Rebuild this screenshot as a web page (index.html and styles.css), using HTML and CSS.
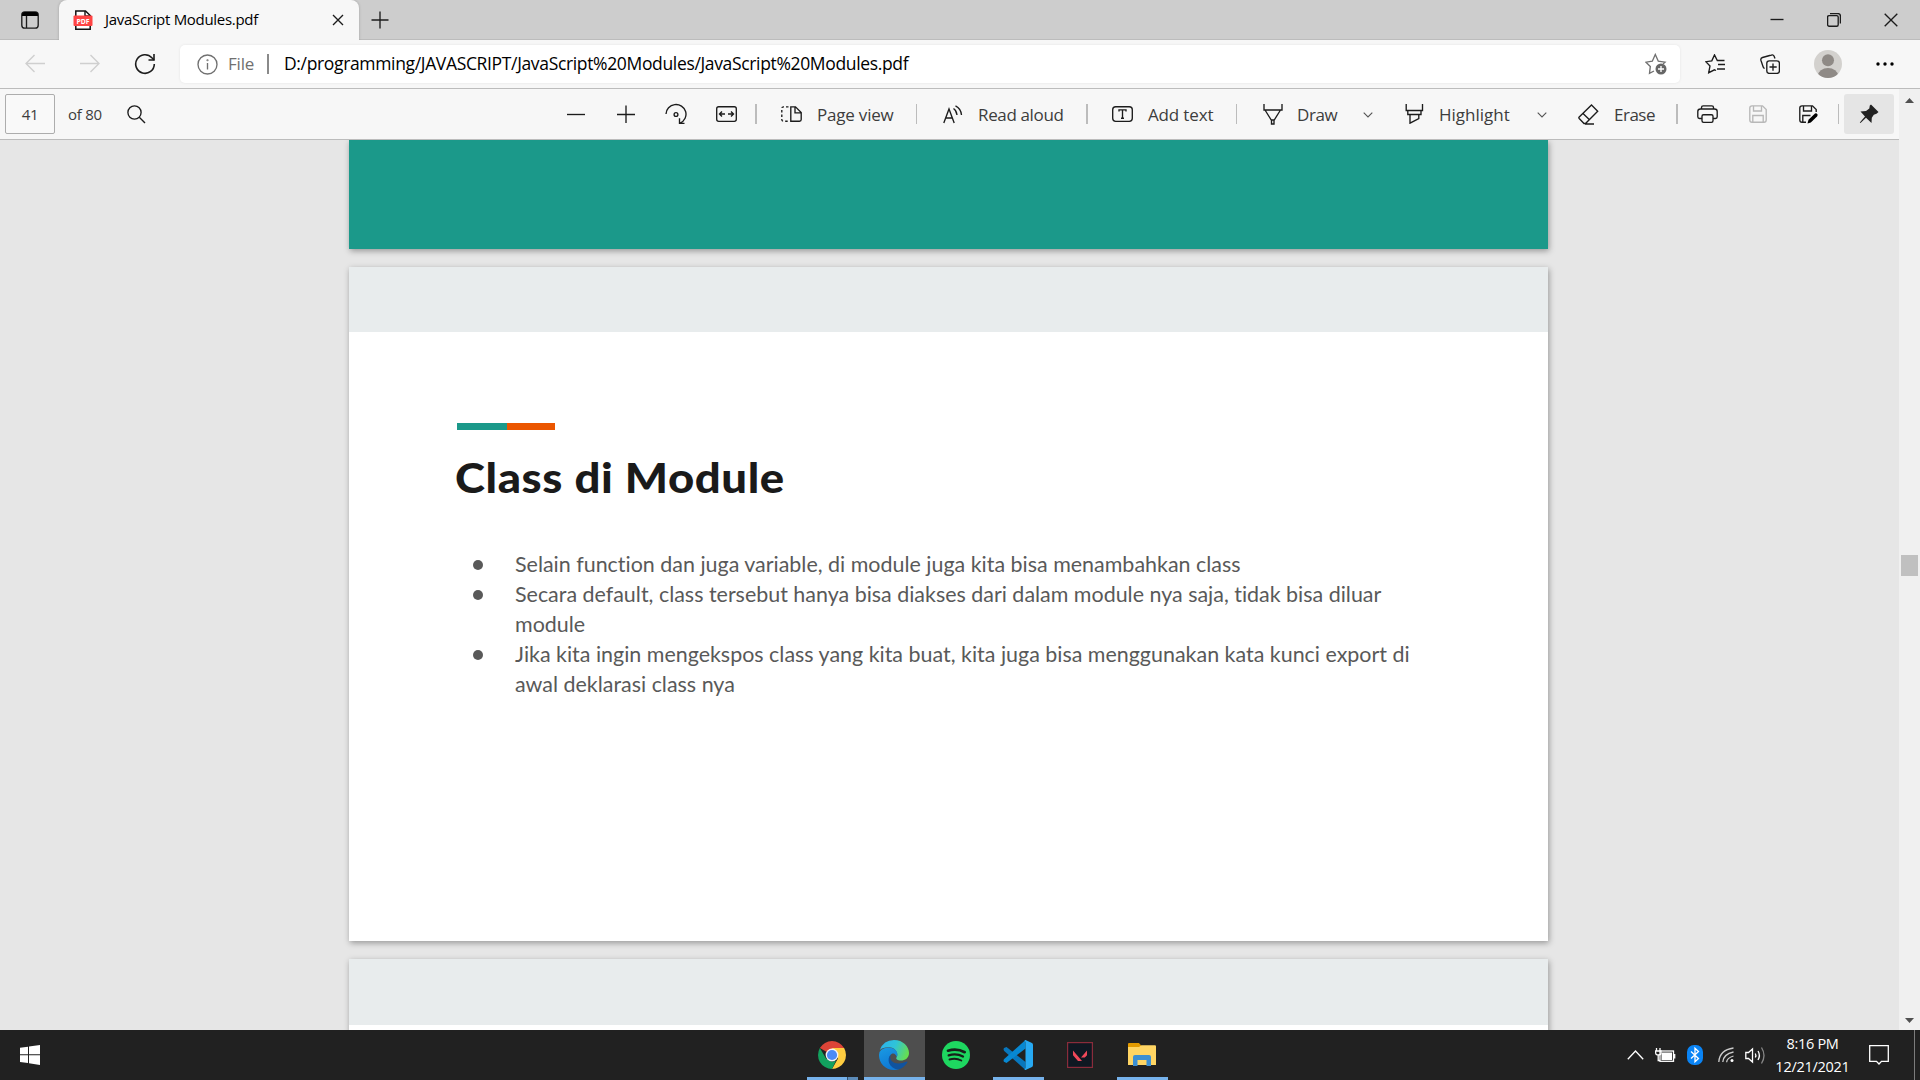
FILE: index.html
```html
<!DOCTYPE html>
<html lang="en">
<head>
<meta charset="utf-8">
<title>JavaScript Modules.pdf</title>
<link rel="stylesheet" href="styles.css">
</head>
<body>
<div class="tabstrip">
  <div class="tab-actions"><svg class="ic" width="18" height="18" viewBox="0 0 18 18"><rect x=".8" y=".8" width="16.4" height="16.4" rx="3"/><path class="fill" d="M1 5V3.500Q1 1 3.500 1H14.500Q17 1 17 3.500V5Z"/><path d="M5.500 5V17"/></svg></div>
  <div class="tab">
    <svg class="favicon" width="20" height="20" viewBox="0 0 20 20"><path d="M2.800 19.200V1H12.500L17.200 5.500V19.200Z" fill="#fff" stroke="#111" stroke-width="1.500"/><path d="M12 1V6H17.500" fill="none" stroke="#111" stroke-width="1.400"/><rect x=".5" y="5.500" width="19" height="10.500" rx="1" fill="#f44"/><text x="10" y="13.500" text-anchor="middle">PDF</text></svg>
    <span class="tab-title">JavaScript Modules.pdf</span>
    <svg class="ic tab-close" width="12" height="12" viewBox="0 0 12 12"><path d="M1 1L11 11M11 1L1 11"/></svg>
  </div>
  <svg class="ic new-tab" width="18" height="18" viewBox="0 0 18 18"><path d="M9 .5V17.500M.5 9H17.500"/></svg>
  <div class="window-buttons">
    <svg class="ic" width="14" height="14" viewBox="0 0 14 14"><path d="M.5 6.500H13.500"/></svg>
    <svg class="ic" width="14" height="14" viewBox="0 0 14 14"><rect x=".6" y="2.600" width="10.600" height="10.600" rx="1.500"/><path d="M3 .6H11Q13.400 .6 13.400 3V10.500"/></svg>
    <svg class="ic" width="14" height="14" viewBox="0 0 14 14"><path d="M.7 .7L13.300 13.300M13.300 .7L.7 13.300"/></svg>
  </div>
</div>

<div class="navbar">
  <div class="nav-buttons">
    <svg class="ic off" width="20" height="20" viewBox="0 0 20 20"><path d="M20 9.500H1M9.500 1L1 9.500L9.500 18"/></svg>
    <svg class="ic off" width="20" height="20" viewBox="0 0 20 20"><path d="M0 9.500H19M10.500 1L19 9.500L10.500 18"/></svg>
    <svg class="ic reload" width="22" height="22" viewBox="0 0 22 22"><path d="M20.300 11A9.300 9.300 0 1 1 17.900 4.800L20 7"/><path d="M20 1V7H14.500"/></svg>
  </div>
  <div class="address">
    <svg class="ic info" width="21" height="21" viewBox="0 0 21 21"><circle cx="10.500" cy="10.500" r="9.500"/><path d="M10.500 9V15.500"/><circle cx="10.500" cy="6.200" r=".4"/></svg>
    <span class="scheme">File</span>
    <i class="addr-rule"></i>
    <span class="url">D:/programming/JAVASCRIPT/JavaScript%20Modules/JavaScript%20Modules.pdf</span>
    <svg class="ic add-star" width="22" height="22" viewBox="0 0 22 22"><path d="M9 18L4.500 20.300L5.300 13.500L1 9.200L7.300 8.200L10.300 1.500L13.300 8.200L20 9.200L18 11"/><circle cx="16" cy="16" r="5.500" fill="#666" stroke="none"/><path d="M16 13V19M13 16H19" stroke="#fff"/></svg>
  </div>
  <div class="nav-tools">
    <svg class="ic" width="20" height="20" viewBox="0 0 20 20"><path d="M19.500 6.500H12.300L9.500 .9L6.800 6.900L.8 7.700L5 12L3.700 18.700L9.500 15.800L11 16.500M13 10.500H20M12 15H20"/></svg>
    <svg class="ic" width="20" height="20" viewBox="0 0 20 20"><rect x="6.800" y="6.800" width="12.600" height="12.600" rx="2.500"/><path d="M13 9.500V16.700M9.500 13H16.700M15 4.500L14 2Q13.300 .4 11.500 1L2.500 3.500Q.4 4.200 .9 6.200L3 12.500Q3.400 14 4.600 14.500"/></svg>
    <svg width="28" height="28" viewBox="0 0 28 28"><defs><clipPath id="face"><circle cx="14" cy="14" r="14"/></clipPath></defs><circle cx="14" cy="14" r="14" fill="#d3d1ce"/><g clip-path="url(#face)" fill="#8f8a86"><circle cx="14" cy="10.300" r="6"/><ellipse cx="14" cy="25.500" rx="10" ry="7.500"/></g></svg>
    <svg width="18" height="4" viewBox="0 0 18 4"><circle cx="2" cy="2" r="1.700"/><circle cx="9" cy="2" r="1.700"/><circle cx="16" cy="2" r="1.700"/></svg>
  </div>
</div>

<div class="viewer">
  <div class="viewer-main">
    <div class="pdfbar">
      <div class="page-box">41</div>
      <span class="page-count">of 80</span>
      <svg class="ic search" width="19" height="19" viewBox="0 0 19 19"><circle cx="7.500" cy="7.500" r="6.600"/><path d="M12.300 12.300L18 18"/></svg>
      <div class="zoom-tools">
        <svg class="ic" width="18" height="18" viewBox="0 0 18 18"><path d="M0 9.500H18"/></svg>
        <svg class="ic" width="18" height="18" viewBox="0 0 18 18"><path d="M0 9.500H18M9 .5V18"/></svg>
        <svg class="ic" width="22" height="22" viewBox="0 0 22 22"><path d="M1 11A10 9.700 0 1 1 15.200 20M14.500 15.300V20.300H19.500"/><circle cx="11" cy="11.500" r="1.900"/></svg>
        <svg class="ic" width="21" height="16" viewBox="0 0 21 16"><rect x=".7" y=".7" width="19.600" height="14.600" rx="2"/><path d="M3.500 8H9M6 5.500L3.500 8L6 10.500M12 8H17.500M15 5.500L17.500 8L15 10.500"/></svg>
      </div>
      <i class="rule wide"></i>
      <div class="tool t-view"><svg class="ic" width="21" height="16" viewBox="0 0 21 16"><path d="M9.800 .8H14.500L20.200 6.500V13.500Q20.200 15.200 18.500 15.200H9.800ZM14 .8V6.800H20"/><path stroke-dasharray="2.500 2" d="M7.500 .8H2.500Q.8 .8 .8 2.500V13.500Q.8 15.200 2.500 15.200H7.500"/></svg>Page view</div>
      <i class="rule"></i>
      <div class="tool t-read"><svg class="ic" width="20" height="19" viewBox="0 0 20 19"><path d="M.8 18L6 4L11.200 18M2.700 13H9.300M10.500 3.500Q13.500 5.500 14 10M12.500 .8Q18 3.500 18.500 10"/></svg>Read aloud</div>
      <i class="rule wide"></i>
      <div class="tool t-text"><svg class="ic" width="21" height="16" viewBox="0 0 21 16"><rect x=".7" y=".7" width="19.600" height="14.600" rx="3"/><path d="M7 5.500V3.800H14V5.500M10.500 3.800V12.200M9 12.200H12"/></svg>Add text</div>
      <i class="rule"></i>
      <div class="tool t-draw"><svg class="ic" width="20" height="21" viewBox="0 0 20 21"><path d="M1 0V6H19V0M2 6L8.500 16.500V20H11V16.500L17.500 6M8.500 16H11"/></svg>Draw</div>
      <div class="chev"><svg class="ic" width="10" height="6" viewBox="0 0 10 6"><path d="M.7 .7L5 5L9.300 .7"/></svg></div>
      <div class="tool t-light"><svg class="ic" width="19" height="20" viewBox="0 0 19 20"><path d="M1.200 0V6.500H17.500V0M2.800 6.500V10.500H16V6.500M5 10.500V19.200L13.800 14.500V10.500"/></svg>Highlight</div>
      <div class="chev c-light"><svg class="ic" width="10" height="6" viewBox="0 0 10 6"><path d="M.7 .7L5 5L9.300 .7"/></svg></div>
      <div class="tool t-erase"><svg class="ic" width="21" height="21" viewBox="0 0 21 21"><path d="M13.500 1L19.700 7.200L7.500 19.500H6L1.200 14.500Q.5 13.700 1.200 13ZM5 9.500L11.500 15.800M7 20H16"/></svg>Erase</div>
      <i class="rule wide"></i>
      <div class="slot s-print"><svg class="ic" width="21" height="18" viewBox="0 0 21 18"><path d="M5 13.500H2.500Q.8 13.500 .8 11.700V6.500Q.8 4 3.500 4H17.500Q20.200 4 20.200 6.500V11.700Q20.200 13.500 18.500 13.500H16"/><path d="M4.500 4V2.500Q4.500 .8 6.200 .8H14.800Q16.500 .8 16.500 2.500V4"/><rect x="5" y="9.700" width="11" height="7.600" rx="1.500"/></svg></div>
      <div class="slot s-save"><svg class="ic off2" width="18" height="18" viewBox="0 0 18 18"><path d="M3 .8H13.500L17.200 4.500V15Q17.200 17.200 15 17.200H3Q.8 17.200 .8 15V3Q.8 .8 3 .8ZM4.500 .8V6H12.500V.8M3.800 17V10.500H14.200V17"/></svg></div>
      <div class="slot s-saveas"><svg class="ic" width="19" height="19" viewBox="0 0 19 19"><path d="M7 17.200H3Q.8 17.200 .8 15V3Q.8 .8 3 .8H13.500L17.200 4.500V7M4.500 .8V6H12.500V.8M3.800 17V10.500H11.500"/><path class="fill" d="M8.500 18.500L9.500 14.800L16 8.500Q17.500 7.800 18.300 9.200Q19 10.500 18 11.500L11.800 17.500Z"/></svg></div>
      <i class="rule"></i>
      <div class="pin"><svg width="20" height="20" viewBox="0 0 20 20"><path d="M12 .5L19.500 8L17.500 9.800L14.800 10.800L12.800 13.800L12.500 19L7 13.800L1.500 19L.8 18.500L6 12.500L1.500 7.500L7 7L10.300 4.500L10.800 1.500Z" fill="#222"/></svg></div>
    </div>
    <div class="pages">
      <div class="page page-prev"></div>
      <div class="page page-current">
        <div class="slide-head"></div>
        <div class="slide-body">
          <div class="accent"></div>
          <h1>Class di Module</h1>
          <ul>
            <li>Selain function dan juga variable, di module juga kita bisa menambahkan class</li>
            <li>Secara default, class tersebut hanya bisa diakses dari dalam module nya saja, tidak bisa diluar<br>module</li>
            <li>Jika kita ingin mengekspos class yang kita buat, kita juga bisa menggunakan kata kunci export di<br>awal deklarasi class nya</li>
          </ul>
        </div>
      </div>
      <div class="page page-next"><div class="slide-head"></div></div>
    </div>
  </div>
  <div class="scrollbar">
    <svg width="9" height="5" viewBox="0 0 9 5"><path d="M4.500 0L9 5H0Z" fill="#505050"/></svg>
    <div class="thumb"></div>
    <svg class="down" width="9" height="5" viewBox="0 0 9 5"><path d="M4.500 5L9 0H0Z" fill="#505050"/></svg>
  </div>
</div>

<div class="taskbar">
  <svg class="start" width="20" height="20" viewBox="0 0 20 20"><path fill="#fff" d="M0 2.800L8 1.700V9.300H0ZM9 1.500L20 0V9.300H9ZM0 10.300H8V18L0 17ZM9 10.300H20V20L9 18.300Z"/></svg>
  <div class="apps">
    <div class="app open chrome"><svg width="28" height="28" viewBox="0 0 28 28"><path d="M14 14L1.880 7A14 14 0 0 1 26.120 7Z" fill="#dc4437"/><path d="M14 7H26.120A14 14 0 0 1 14 28L20 17.500Z" fill="#ffcd40"/><path d="M14 28A14 14 0 0 1 1.880 7L8 17.500L14 21L18 19.500Z" fill="#12a15e"/><circle cx="14" cy="14" r="6.400" fill="#f4f4f4"/><circle cx="14" cy="14" r="5.100" fill="#4c8bf5"/></svg></div>
    <div class="app open active"><svg width="30" height="30" viewBox="0 0 30 30"><defs><linearGradient id="eg" x1="0" x2="1" y1=".2" y2=".5"><stop offset="0" stop-color="#2bb1ee"/><stop offset=".5" stop-color="#2fc4d8"/><stop offset="1" stop-color="#66dd51"/></linearGradient><linearGradient id="eb" x1="0" x2=".4" y1="0" y2="1"><stop offset="0" stop-color="#1a9be3"/><stop offset="1" stop-color="#0f78d4"/></linearGradient></defs><path d="M.8 10Q4.500 0 15 0C24 0 30 6.500 30 13C30 18 26 20.500 22 20.500C18.500 20.500 16.500 19 17.500 17.500C19.500 15 18 8 10.500 7.300Q4 7 .8 10Z" fill="url(#eg)"/><path d="M0 15Q0 8 9.500 7.500C15.500 7.500 19 11.500 18.300 15.500L17.800 17C17 15 15.500 12.500 12.500 14C8 17 11 27 20 29.200Q17.500 30 15 30C6 30 0 23 0 15Z" fill="url(#eb)"/><path d="M12 14.300C9 21 16 26.500 28 21.500Q29 21.500 28 23Q24.500 28.300 19 29.600C10 28 7 19.500 12 14.300Z" fill="#10539f"/></svg></div>
    <div class="app"><svg width="28" height="28" viewBox="0 0 28 28"><circle cx="14" cy="14" r="14" fill="#1ed760"/><g fill="none" stroke="#17201a" stroke-linecap="round"><path stroke-width="2.700" d="M6 9.700Q15 7 22.700 11.200"/><path stroke-width="2.300" d="M6.700 14.300Q14.500 12 21 15.500"/><path stroke-width="1.900" d="M7.500 18.500Q14 16.700 19.300 19.500"/></g></svg></div>
    <div class="app open"><svg width="30" height="30" viewBox="0 0 30 30"><path d="M1 8L3.500 7L22.500 22V30L1.200 11Q0 9.500 1 8Z" fill="#0877bd"/><path d="M1 21.800L3.500 23L22.500 8.500V0L1.200 19Q0 20.300 1 21.800Z" fill="#0788d2"/><path d="M22.500 0L29 3Q30 3.700 30 5V25Q30 26.300 29 27L22.500 30Q22 30 21.500 29.500L22.500 28V2L21.500 .5Z" fill="#27a9f2"/></svg></div>
    <div class="app"><svg width="26" height="26" viewBox="0 0 26 26"><rect x=".6" y=".6" width="24.800" height="24.800" fill="#0f1822" stroke="#8a2c3b" stroke-width="1.200"/><path d="M6 8.500L15 19H11L6 13.300ZM20 8.500V13.300L17.800 15.500H14Z" fill="#f0495a"/></svg></div>
    <div class="app open"><svg width="28" height="24" viewBox="0 0 28 24"><path d="M0 1Q0 0 1 0H11L13.500 3V6H0Z" fill="#e29a00"/><path d="M0 4H11L13.500 2.300H27Q28 2.300 28 3.500V22H0Z" fill="#ffd563"/><path d="M5 23V14Q5 12 7 12H21Q23 12 23 14V23H18.500V17H9.500V23Z" fill="#3c8fd2"/></svg></div>
  </div>
  <div class="tray">
    <svg class="tr up" width="17" height="10" viewBox="0 0 17 10"><path d="M.8 9.200L8.500 1L16.200 9.200"/></svg>
    <svg class="tr bat" width="21" height="14" viewBox="0 0 21 14"><rect x="5" y="3" width="13.500" height="10.300"/><rect x="6.500" y="4.500" width="10.500" height="7.500" fill="#fff" stroke="none"/><path d="M19.700 6V10.500M1.500 0V3M5 0V3M.5 3H6V5Q6 7 3.300 7Q.7 7 .7 5ZM3.200 7V12.500H5"/></svg>
    <svg class="bt" width="16" height="20" viewBox="0 0 16 20"><rect width="16" height="20" rx="7" fill="#0a84f5"/><path d="M4 6.500L11.500 13.500L8 16.800V3.200L11.500 6.500L4 13.500" fill="none" stroke="#fff" stroke-width="1.300"/></svg>
    <svg class="tr wifi" width="17" height="16" viewBox="0 0 17 16"><g stroke="#ccc"><path d="M.8 15Q1.500 3 15.500 1M4.800 15Q5.500 7 15.500 5M8.600 15.200Q9 11 15.500 9"/></g><circle cx="14" cy="13.500" r="1.500" fill="#fff" stroke="none"/></svg>
    <svg class="tr vol" width="20" height="19" viewBox="0 0 20 19"><path d="M.8 6.500H3.500L7.500 3V16L3.500 12.500H.8ZM10.300 7.500Q11.500 9.500 10.300 11.500M13 5Q15.800 9.500 13 14"/><path stroke="#888" d="M16.500 1.500Q21.500 9.500 16.500 17.500"/></svg>
    <div class="clock"><span class="time">8:16 PM</span><span class="date">12/21/2021</span></div>
    <svg class="tr note" width="20" height="20" viewBox="0 0 20 20"><path d="M.7 .7H19.300V16.300H12.500L10 19L7.500 16.300H.7Z"/></svg>
    <i class="peek"></i>
  </div>
</div>
</body>
</html>
```
FILE: styles.css
```css
* { box-sizing: border-box; }
body { margin: 0; width: 1920px; height: 1080px; overflow: hidden; display: flex; flex-direction: column; background: #f7f7f7; color: #000; font-family: "Open Sans", "Noto Sans", sans-serif; }
svg { display: block; flex: none; }
.ic { fill: none; stroke: #1c1c1c; stroke-width: 1.35; }
.ic .fill { fill: #000; stroke: none; }

/* tab strip */
.tabstrip { height: 40px; flex: none; display: flex; align-items: center; background: #cdcdcd; border-bottom: 1px solid #bcbcbc; }
.tab-actions { width: 59px; padding: 1px 0 0 21px; }
.tab { width: 300px; height: 40px; align-self: flex-start; display: flex; align-items: center; padding-left: 14px; background: #f7f7f7; border-radius: 8px 8px 0 0; box-shadow: 0 0 3px rgba(0,0,0,.22); clip-path: inset(0 -4px 0 -4px); }
.favicon text { font: 700 6.800px "Open Sans", sans-serif; fill: #fff; }
.tab-title { margin-left: 12px; width: 228px; font-size: 15px; line-height: 20px; letter-spacing: -.3px; white-space: nowrap; padding-bottom: 2px; }
.tab-close { margin-left: -1px; }
.new-tab { margin-left: 12px; }
.window-buttons { margin-left: auto; margin-right: 22px; display: flex; gap: 43px; }

/* address row */
.navbar { height: 49px; flex: none; display: flex; align-items: center; border-bottom: 1px solid #bcbcbc; }
.nav-buttons { width: 180px; display: flex; align-items: center; padding-left: 25px; gap: 35px; }
.ic.off { stroke: #cfcfcf; }
.reload { margin-left: -1px; stroke-width: 1.600; }
.address { width: 1500px; height: 38px; display: flex; align-items: center; padding-left: 17px; background: #fff; border-radius: 5px; box-shadow: 0 0 3px rgba(0,0,0,.08); }
.info { stroke: #707070; }
.scheme { margin-left: 10px; width: 39px; font-size: 17px; letter-spacing: -.2px; color: #707070; padding-bottom: 2px; }
.addr-rule { width: 2px; height: 20px; background: #8a8a8a; }
.url { margin-left: 15px; width: 1360px; font-size: 17.500px; letter-spacing: -.345px; line-height: 24px; padding-bottom: 2px; }
.add-star { stroke: #707070; margin-left: 1px; }
.nav-tools { display: flex; align-items: center; padding-left: 25px; }
.nav-tools svg:nth-child(2) { margin-left: 35px; }
.nav-tools svg:nth-child(3) { margin-left: 34px; }
.nav-tools svg:nth-child(4) { margin-left: 34px; }

/* viewer */
.viewer { height: 941px; flex: none; display: flex; }
.viewer-main { width: 1899px; display: flex; flex-direction: column; }
.pdfbar { height: 51px; flex: none; display: flex; align-items: center; background: #f7f7f7; border-bottom: 1px solid #bcbcbc; padding-left: 5px; font-size: 17px; letter-spacing: -.28px; color: #3d3d3d; white-space: nowrap; }
.page-box { width: 50px; height: 40px; border: 1px solid #adadad; border-radius: 2px; text-align: center; line-height: 39px; font-size: 15px; background: #f9f9f9; }
.page-count { width: 59px; margin-left: 13px; font-size: 15px; }
.zoom-tools { display: grid; grid-template-columns: 51px 50px 50px 51px; justify-items: center; align-items: center; width: 205px; margin-left: 404px; }
.rule { width: 1px; height: 20px; background: #bcbcbc; }
.rule.wide { width: 2px; }
.tool { display: flex; align-items: center; gap: 15px; height: 40px; }
.t-view { width: 159px; padding-left: 24px; letter-spacing: -.2px; }
.t-read { width: 169px; padding-left: 26px; letter-spacing: -.36px; }
.t-text { width: 148px; padding-left: 24px; letter-spacing: -.15px; }
.t-draw { width: 103px; padding-left: 26px; gap: 14px; letter-spacing: -.4px; }
.chev { width: 55px; display: flex; justify-content: center; padding-top: 2px; }
.chev .ic { stroke: #555; stroke-width: 1.100; }
.t-light { width: 120px; padding-left: 10px; letter-spacing: 0; }
.c-light { width: 53px; }
.t-erase { width: 108px; padding-left: 10px; letter-spacing: -.5px; }
.slot { display: flex; justify-content: center; }
.s-print { width: 58px; }
.s-save { width: 43px; }
.s-saveas { width: 59px; }
.off2 { stroke: #b8b8b8; }
.pin { margin-left: 5px; width: 50px; height: 40px; display: flex; align-items: center; justify-content: center; border-radius: 3px; background: #e5e5e5; }

.pages { flex: 1; overflow: hidden; display: flex; flex-direction: column; gap: 18px; padding-left: 349px; background: #e6e6e6; }
.page { width: 1199px; height: 674px; flex: none; background: #fff; box-shadow: 1px 2px 6px rgba(0,0,0,.35); }
.page-prev { height: 109px; background: #1b998a; }
.slide-head { height: 65px; background: #e8eced; }
.page-next .slide-head { height: 66px; }
.slide-body { padding: 91px 0 0 107px; }
.accent { width: 98px; height: 7px; margin-left: 1px; background: linear-gradient(to right, #1b998a 50px, #eb5600 50px); }
h1 { margin: 22px 0 0 -1.500px; font: 900 42.500px/50px Lato, sans-serif; letter-spacing: .550px; color: #1a1a1a; white-space: nowrap; transform: scaleX(1.07); transform-origin: left; }
ul { list-style: none; margin: 47px 0 0; padding: 0 0 0 59px; font: 21.440px/30px Lato, sans-serif; font-variant-ligatures: none; color: #595959; white-space: nowrap; }
li::before { content: ""; float: left; width: 10px; height: 10px; margin: 11px 0 0 -42px; border-radius: 50%; background: #595959; }

.scrollbar { width: 21px; background: #f0f0f0; display: flex; flex-direction: column; align-items: center; padding: 9px 0 7px; }
.thumb { width: 17px; height: 21px; margin-top: 452px; background: #c0c0c0; }
.down { margin-top: auto; }

/* taskbar */
.taskbar { height: 50px; flex: none; display: flex; align-items: center; background: #212121; color: #fff; }
.start { margin-left: 20px; }
.apps { display: flex; height: 50px; margin-left: 761px; }
.app { width: 62px; height: 50px; display: grid; grid-template-rows: 47px 3px; justify-items: center; align-items: center; }
.app svg { margin-top: 3px; }
.app.open::after { content: ""; width: 51px; height: 3px; background: #76b2eb; }
.app.chrome::after { background: linear-gradient(to right, #76b2eb 40px, #32506c 40px, #32506c 41px, #5c8bb8 41px); }
.app.active { background: linear-gradient(to right, transparent 1px, #4e4e4e 1px); }
.app.active::after { width: 61px; margin-left: 1px; }
.tray { display: flex; align-items: center; height: 50px; margin-left: 454px; }
.tr { fill: none; stroke: #fff; stroke-width: 1.300; }
.bat { margin-left: 11px; }
.bt { margin-left: 11px; }
.wifi { margin-left: 15px; }
.vol { margin-left: 10px; }
.clock { width: 95px; display: flex; flex-direction: column; align-items: center; font-size: 14.500px; line-height: 23px; white-space: nowrap; margin-top: -1px; }
.time { letter-spacing: -.3px; }
.date { letter-spacing: -.27px; }
.note { margin-left: 9px; }
.peek { width: 1px; height: 50px; margin-left: 25px; background: #7c7c7c; }
```
